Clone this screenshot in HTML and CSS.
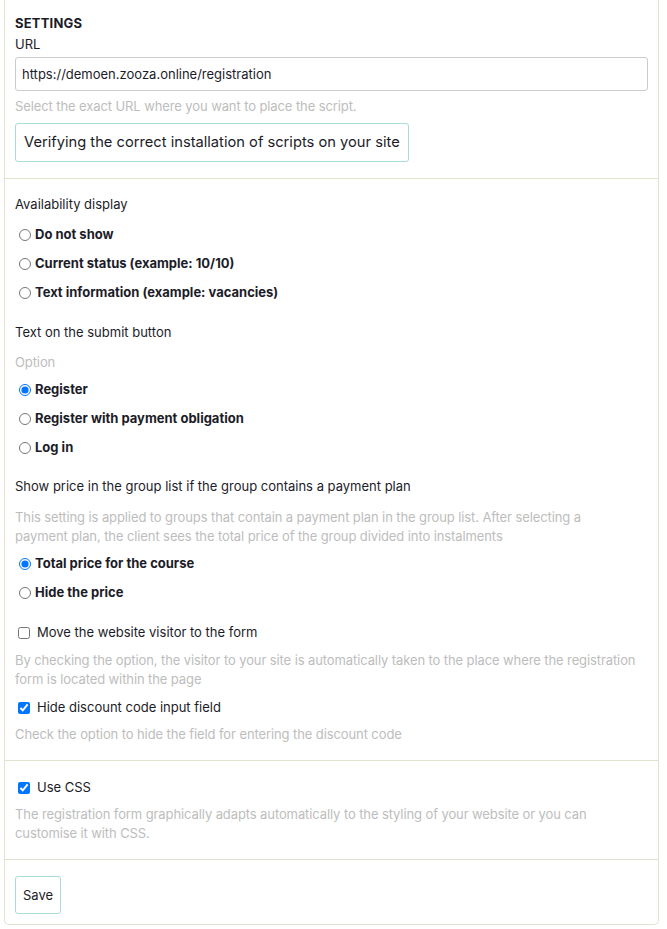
FILE: index.html
```html
<!DOCTYPE html>
<html lang="en">
<head>
  <meta charset="UTF-8">
  <meta name="viewport" content="width=device-width, initial-scale=1.0">
  <title>Settings</title>
  <link rel="stylesheet" href="styles.css">
</head>
<body>
  <div class="card">
    <div class="section first">
      <h4 class="title">SETTINGS</h4>
      <label class="url-label">URL</label>
      <input class="input" type="text" value="https://demoen.zooza.online/registration">
      <p class="url-help">Select the exact URL where you want to place the script.</p>
      <button class="btn btn-big">Verifying the correct installation of scripts on your site</button>
    </div>

    <div class="section">
      <div class="field">
        <p class="label">Availability display</p>
        <div class="options">
          <label class="radio"><input type="radio" name="avail"> Do not show</label>
          <label class="radio"><input type="radio" name="avail"> Current status (example: 10/10)</label>
          <label class="radio"><input type="radio" name="avail"> Text information (example: vacancies)</label>
        </div>
      </div>

      <div class="field tight">
        <p class="label">Text on the submit button</p>
        <p class="help">Option</p>
        <div class="options">
          <label class="radio"><input type="radio" name="submit" checked> Register</label>
          <label class="radio"><input type="radio" name="submit"> Register with payment obligation</label>
          <label class="radio"><input type="radio" name="submit"> Log in</label>
        </div>
      </div>

      <div class="field">
        <p class="label wide">Show price in the group list if the group contains a payment plan</p>
        <p class="help narrow">This setting is applied to groups that contain a payment plan in the group list. After selecting a payment plan, the client sees the total price of the group divided into instalments</p>
        <div class="options">
          <label class="radio"><input type="radio" name="price" checked> Total price for the course</label>
          <label class="radio"><input type="radio" name="price"> Hide the price</label>
        </div>
      </div>

      <div class="field last">
        <label class="check"><input type="checkbox"> Move the website visitor to the form</label>
        <p class="help after-check">By checking the option, the visitor to your site is automatically taken to the place where the registration form is located within the page</p>
        <label class="check"><input type="checkbox" checked> Hide discount code input field</label>
        <p class="help">Check the option to hide the field for entering the discount code</p>
      </div>
    </div>

    <div class="section css">
      <label class="check"><input type="checkbox" checked> Use CSS</label>
      <p class="help">The registration form graphically adapts automatically to the styling of your website or you can customise it with CSS.</p>
    </div>

    <div class="section footer">
      <button class="btn btn-save">Save</button>
    </div>
  </div>
</body>
</html>
```

FILE: styles.css
```css
body { margin: 0; padding: 0 8px 6px 4px; font-family: Inter, "Noto Sans", sans-serif; font-size: 13px; line-height: 19px; color: #1c1c28; background: #fff; }
p { margin: 0; }
.card { border: 1px solid #e2e2cf; border-top: none; border-radius: 0 0 5px 5px; }
.section { padding: 16px 10px 16px 10px; border-bottom: 1px solid #e2e2cf; }
.section:last-child { border-bottom: none; }

.first { padding-top: 14px; display: flex; flex-direction: column; align-items: flex-start; }
.title { margin: 0 0 2px; font-size: 13px; font-weight: 700; letter-spacing: 0.2px; }
.url-label { display: block; margin-bottom: 3px; }
.input { box-sizing: border-box; width: 100%; height: 34px; border: 1px solid #ccc; border-radius: 3px; padding: 0 6px; font: inherit; color: #1c1c28; }
.url-help { margin: 6px 0 7px; color: #bdbdbd; letter-spacing: -0.1px; }

.field { margin-bottom: 21px; }
.field.tight { margin-bottom: 20px; }
.field.last { margin-bottom: 0; }
.label { margin-bottom: 11px; }
.label.wide { margin-bottom: 12px; }
.help { margin-bottom: 8px; margin-right: 10px; color: #bdbdbd; letter-spacing: -0.1px; }
.help.narrow { margin-right: 18px; }
.help:last-child { margin-bottom: 0; }
.options { display: flex; flex-direction: column; gap: 10px; }
.radio { display: flex; align-items: center; gap: 4px; font-weight: 700; margin-left: 4px; height: 19px; }
.radio input { margin: 0; width: 12px; height: 12px; }
.check { display: flex; align-items: center; gap: 7px; margin-left: 3px; height: 19px; }
.check input { margin: 0; width: 12px; height: 12px; }
.check + .help { margin-top: 8px; }
.check + .help.after-check { margin-top: 9px; margin-bottom: 9px; }

.css { padding-top: 17px; padding-bottom: 16px; }

.btn { background: #fff; border: 1px solid #a9dcd8; border-radius: 3px; font: inherit; color: #1c1c28; cursor: pointer; }
.btn-big { height: 39px; padding: 0 8px; font-size: 14.7px; }
.btn-save { height: 38px; padding: 0 7px; }
.footer { padding: 16px 10px 10px; }
```
